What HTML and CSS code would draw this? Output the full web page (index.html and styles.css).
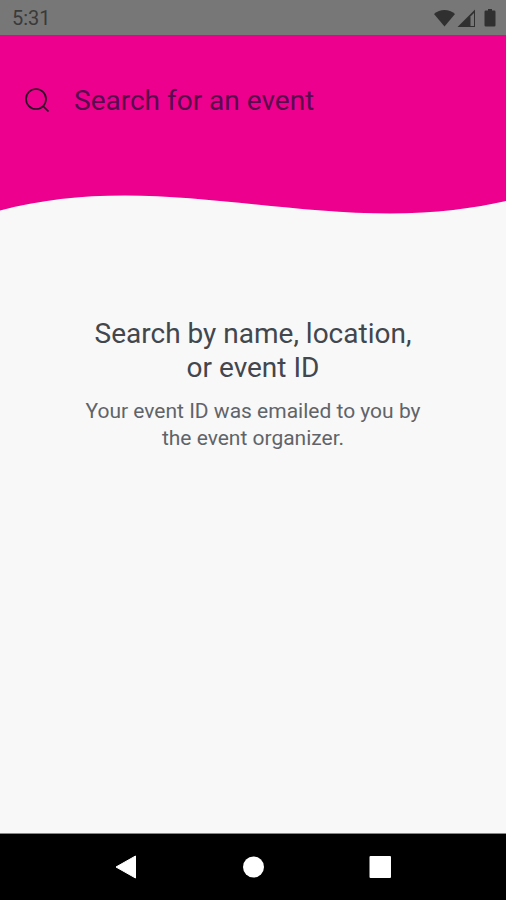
FILE: index.html
```html
<!DOCTYPE html>
<html lang="en">
<head>
<meta charset="utf-8">
<meta name="viewport" content="width=device-width, initial-scale=1">
<title>Search for an event</title>
<link rel="stylesheet" href="styles.css">
</head>
<body>
<div class="status">
  <time>5:31</time>
  <svg class="status-icons" width="64" height="20" viewBox="0 0 64 20" aria-hidden="true">
    <path d="M0 6C6 .7 15 .7 21 6L10.500 18.500Z" fill="#303030"/>
    <path d="M41 1.500V19H23.500Z" fill="#303030"/>
    <path d="M36.500 8.500L40 5V18H36.500Z" fill="#777"/>
    <path d="M54 2.500V1h4v1.500h2.200a1.300 1.300 0 0 1 1.300 1.300v13.400a1.300 1.300 0 0 1-1.300 1.300h-8.400a1.300 1.300 0 0 1-1.300-1.300V3.800a1.300 1.300 0 0 1 1.300-1.300Z" fill="#303030"/>
  </svg>
</div>
<header class="hero">
  <form class="search" role="search">
    <label for="query" aria-label="Search">
      <svg width="26" height="26" viewBox="0 0 26 26" fill="none" stroke="#2b1025" stroke-width="1.700">
        <circle cx="12" cy="12" r="10"/>
        <path d="M19 19l5.500 5.500"/>
      </svg>
    </label>
    <input id="query" type="text" placeholder="Search for an event">
  </form>
  <svg class="wave" viewBox="0 0 506 20" preserveAspectRatio="none" aria-hidden="true">
    <path d="M0 15.500C40 5 80 .5 125 .5C210 .5 300 18.500 390 18.500C435 18.500 475 13 506 6V20H0Z" fill="#f8f8f8"/>
  </svg>
</header>
<main class="content">
  <h1>Search by name, location,<br>or event ID</h1>
  <p>Your event ID was emailed to you by<br>the event organizer.</p>
</main>
<nav class="navbar">
  <button type="button" aria-label="Back"><svg width="24" height="24" viewBox="0 0 24 24"><path d="M1 12L20.500 1V23Z" fill="#fff" stroke="#fff" stroke-linejoin="round"/></svg></button>
  <button type="button" aria-label="Home"><svg width="24" height="24" viewBox="0 0 24 24"><circle cx="12.500" cy="12" r="10.500" fill="#fff"/></svg></button>
  <button type="button" aria-label="Recent apps"><svg width="24" height="24" viewBox="0 0 24 24"><rect x="1.500" y="1" width="21.500" height="22" rx="1" fill="#fff"/></svg></button>
</nav>
</body>
</html>
```
FILE: styles.css
```css
* {
  box-sizing: border-box;
}

body {
  margin: 0;
  min-height: 100vh;
  display: flex;
  flex-direction: column;
  background: #f8f8f8;
  font-family: Roboto, "Liberation Sans", sans-serif;
  font-weight: 400;
}

.status {
  display: flex;
  align-items: center;
  justify-content: space-between;
  height: 35px;
  padding: 0 8px 0 12px;
  background: #777;
  color: #3a3a3a;
  font-size: 20px;
}

.hero {
  display: flex;
  flex-direction: column;
  background: #ee008f;
}

.search {
  display: flex;
  align-items: center;
  gap: 24px;
  padding: 44px 24px 74px;
}

.search label {
  display: flex;
}

.search input {
  flex: 1;
  min-width: 0;
  height: 42px;
  padding: 0;
  border: 0;
  outline: 0;
  background: transparent;
  color: #5a0b4d;
  font: inherit;
  font-size: 28px;
}

.search input::placeholder {
  color: #5a0b4d;
  opacity: 1;
}

.wave {
  display: block;
  width: 100%;
  height: 20px;
}

.content {
  flex: 1;
  padding: 102px 24px 24px;
  text-align: center;
}

h1 {
  margin: 0 0 13px;
  color: #42464d;
  font-size: 28px;
  font-weight: inherit;
  line-height: 34px;
}

p {
  margin: 0;
  color: #606469;
  font-size: 21px;
  line-height: 27px;
}

.navbar {
  display: grid;
  grid-template-columns: repeat(3, 1fr);
  height: 67px;
  padding: 0 12.5%;
  border-top: 1px solid #888;
  background: #000;
}

.navbar button {
  display: flex;
  align-items: center;
  justify-content: center;
  padding: 0;
  border: 0;
  background: none;
}
```
